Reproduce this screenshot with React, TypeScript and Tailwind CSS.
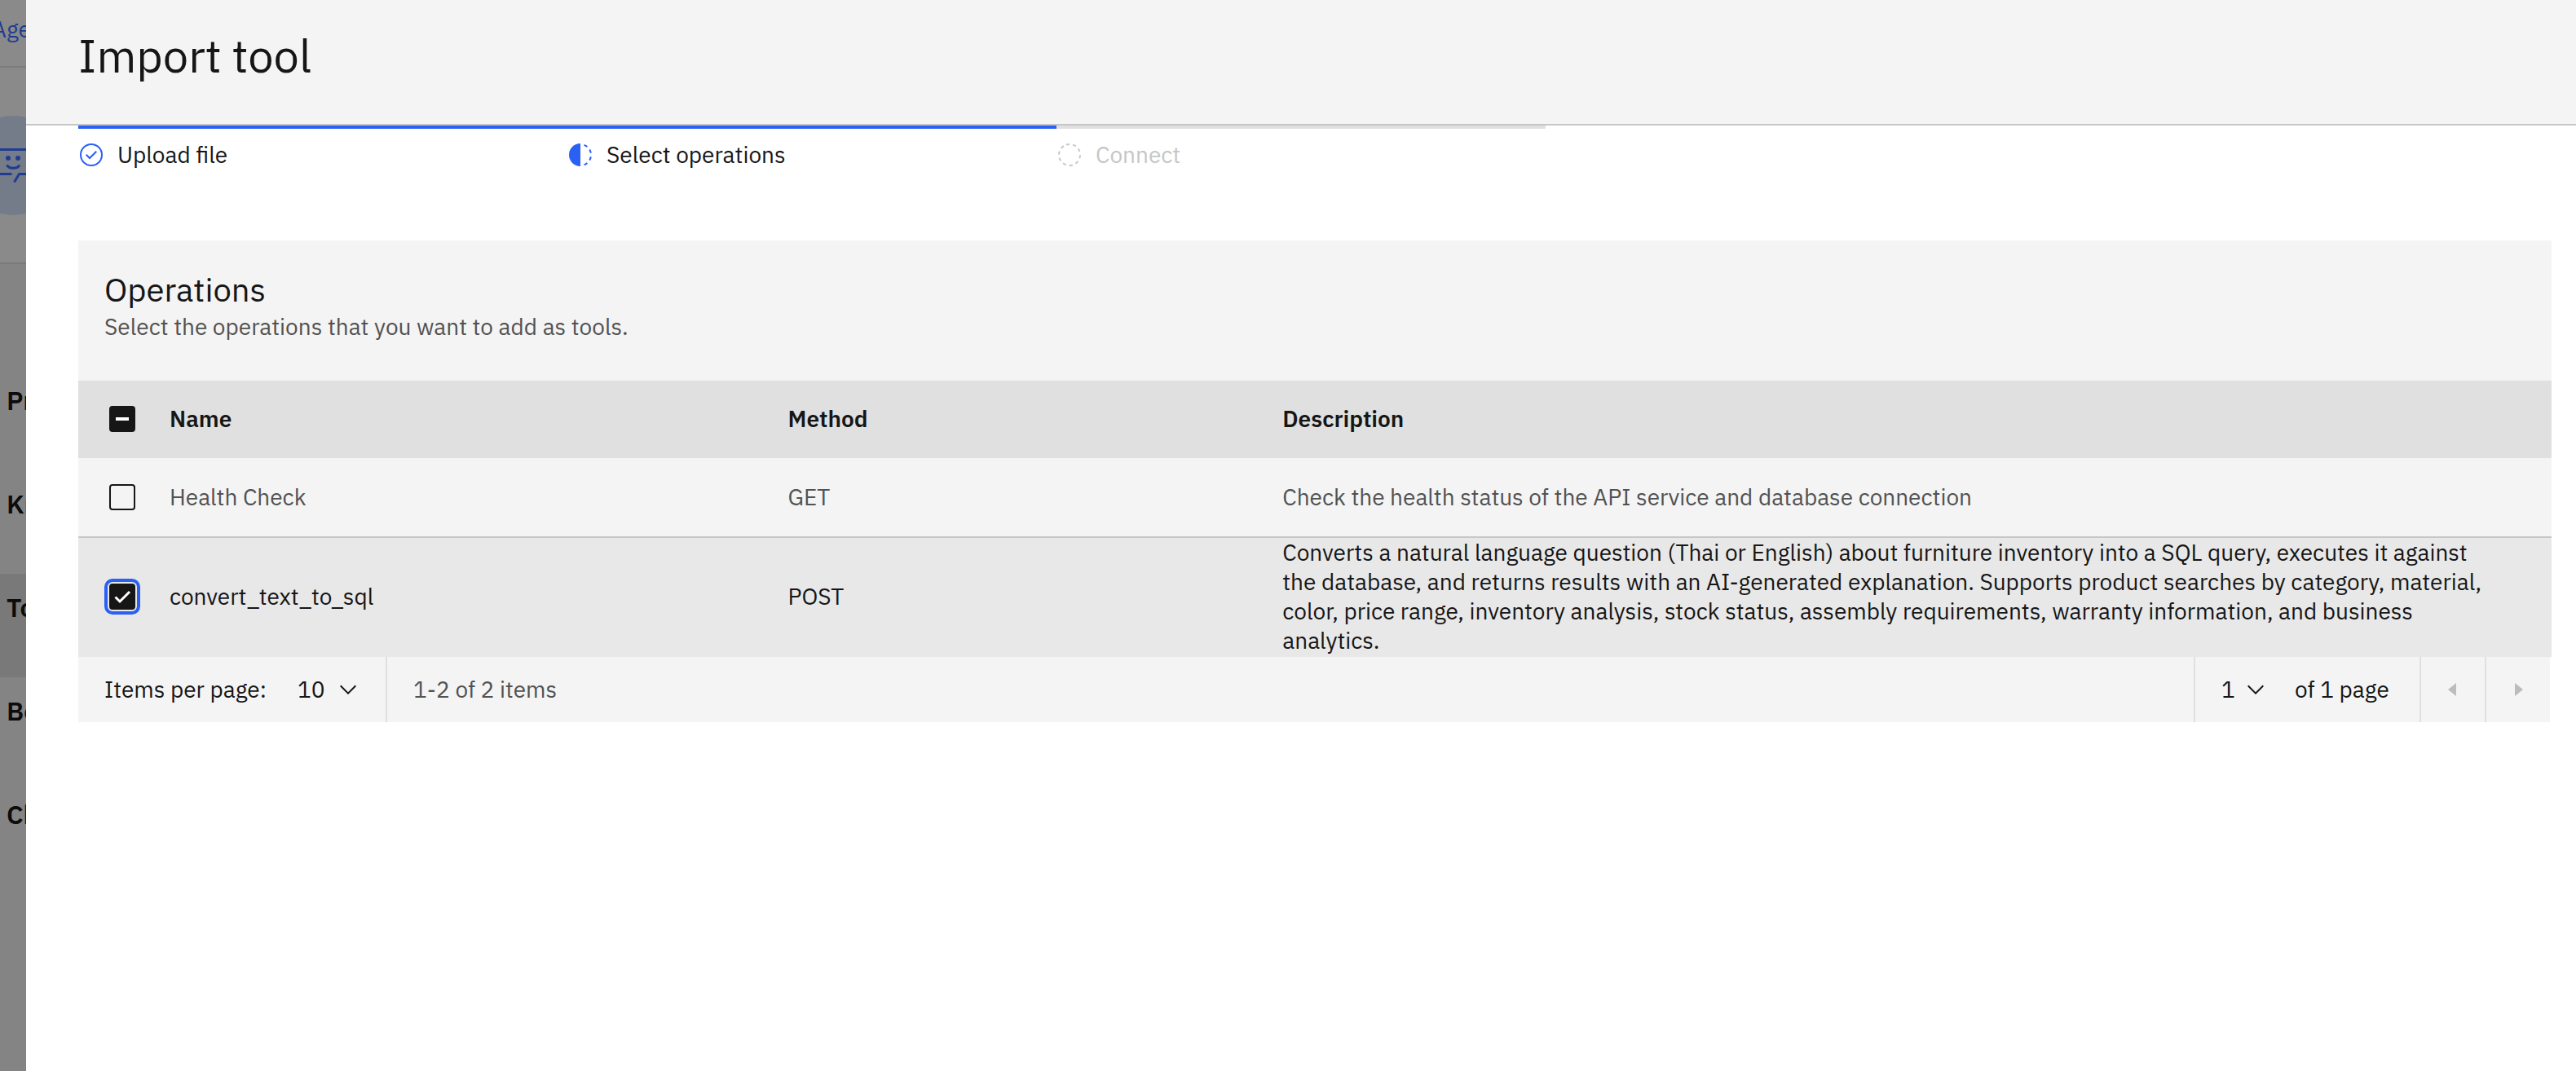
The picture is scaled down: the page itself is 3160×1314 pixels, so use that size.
import React from "react";

type Operation = {
  id: string;
  name: string;
  method: string;
  description: string;
  checked: boolean;
};

const operations: Operation[] = [
  {
    id: "health",
    name: "Health Check",
    method: "GET",
    description: "Check the health status of the API service and database connection",
    checked: false,
  },
  {
    id: "sql",
    name: "convert_text_to_sql",
    method: "POST",
    description:
      "Converts a natural language question (Thai or English) about furniture inventory into a SQL query, executes it against the database, and returns results with an AI-generated explanation. Supports product searches by category, material, color, price range, inventory analysis, stock status, assembly requirements, warranty information, and business analytics.",
    checked: true,
  },
];

const sections = ["Profile", "Knowledge", "Toolset", "Behavior", "Channels"];

function CompleteIcon() {
  return (
    <svg viewBox="0 0 32 32" className="size-8 shrink-0 fill-[#2b60f5]" aria-hidden="true">
      <path d="M14 21.414L9 16.413 10.413 15 14 18.586 21.585 11 23 12.415z" />
      <path d="M16 2a14 14 0 1 0 14 14A14 14 0 0 0 16 2Zm0 26a12 12 0 1 1 12-12 12 12 0 0 1-12 12Z" />
    </svg>
  );
}

function CurrentIcon() {
  return (
    <svg viewBox="0 0 32 32" className="size-8 shrink-0 fill-[#2b60f5]" aria-hidden="true">
      <path d="M23.764 6.859l1.285-1.531A13.976 13.976 0 0 0 20.867 2.887l-.684 1.878A11.973 11.973 0 0 1 23.764 6.859Z" />
      <path d="M27.81 14l1.968-.413A13.889 13.889 0 0 0 28.14 9.046L26.409 10A12.52 12.52 0 0 1 27.81 14Z" />
      <path d="M20.184 27.235l.683 1.878a13.976 13.976 0 0 0 4.182-2.441l-1.285-1.531A11.973 11.973 0 0 1 20.184 27.235Z" />
      <path d="M26.409 22L28.14 23a14.14 14.14 0 0 0 1.638-4.587L27.81 18.066A12.152 12.152 0 0 1 26.409 22Z" />
      <path d="M16 30V2a14 14 0 0 0 0 28Z" />
    </svg>
  );
}

function PendingIcon() {
  return (
    <svg viewBox="0 0 32 32" className="size-8 shrink-0" aria-hidden="true">
      <circle
        cx="16"
        cy="16"
        r="13"
        fill="none"
        stroke="#c6c6c6"
        strokeWidth="2"
        strokeDasharray="4 4.168"
        transform="rotate(-107.8 16 16)"
      />
    </svg>
  );
}

function Chevron() {
  return (
    <svg
      viewBox="0 0 16 16"
      className="pointer-events-none absolute top-1/2 right-0 size-8 -translate-y-1/2 fill-[#161616]"
      aria-hidden="true"
    >
      <path d="M8 11L3 6 3.7 5.3 8 9.6 12.3 5.3 13 6z" />
    </svg>
  );
}

function Checkbox({
  label,
  state,
  focused = false,
}: {
  label: string;
  state: "off" | "on" | "mixed";
  focused?: boolean;
}) {
  const fill = state === "off" ? "bg-transparent" : "bg-[#161616]";
  const ring = focused ? "outline-4 outline-offset-2 outline-[#2b60f5]" : "";
  return (
    <span className="relative ml-[38px] block size-8">
      <input
        type="checkbox"
        aria-label={label}
        defaultChecked={state === "on"}
        ref={(el) => {
          if (el) el.indeterminate = state === "mixed";
        }}
        className={`block size-8 appearance-none rounded-[4px] border-2 border-[#161616] ${fill} ${ring}`}
      />
      {state !== "off" && (
        <svg viewBox="0 0 32 32" className="pointer-events-none absolute inset-0 size-8" aria-hidden="true">
          {state === "on" ? (
            <path d="M7.5 16.5L13 22L25 10" fill="none" stroke="#fff" strokeWidth="3" />
          ) : (
            <rect x="8" y="14" width="16" height="4" fill="#fff" />
          )}
        </svg>
      )}
    </span>
  );
}

function Backdrop() {
  return (
    <aside className="flex w-8 shrink-0 flex-col overflow-hidden bg-[#848484] whitespace-nowrap">
      <div className="flex h-[83px] items-start border-b-2 border-[#7c7c7c] bg-[#8a8a8a] pt-[18px]">
        <a href="#agents" className="-ml-2.5 text-[#1f3d90]">
          Agents
        </a>
      </div>
      <div className="flex h-[241px] items-center border-b-2 border-[#7a7a7a] bg-[#8a8a8a]">
        <svg viewBox="0 0 32 122" className="h-[122px] w-8" aria-hidden="true">
          <circle cx="16" cy="61" r="61" fill="#747b89" />
          <g fill="none" stroke="#1f3d90" strokeWidth="3">
            <path d="M0 41.5H32M0 71.5H14.5M32 71.5H23.5L17.5 81.5" />
            <path d="M8.5 60.5C11 65.5 21.5 65.5 24 60.5" />
          </g>
          <circle cx="10" cy="52" r="3" fill="#1f3d90" />
          <circle cx="22" cy="52" r="3" fill="#1f3d90" />
        </svg>
      </div>
      <nav className="mt-[126px]">
        {sections.map((s) => (
          <a
            key={s}
            href={`#${s.toLowerCase()}`}
            className={`block h-[127px] pt-5 pl-2 text-[32px] leading-[42px] font-semibold text-[#0c0c0c] ${
              s === "Toolset" ? "bg-[#797979]" : ""
            }`}
          >
            {s}
          </a>
        ))}
      </nav>
    </aside>
  );
}

function Steps() {
  const steps = [
    { label: "Upload file", icon: <CompleteIcon />, done: true },
    { label: "Select operations", icon: <CurrentIcon />, done: true },
    { label: "Connect", icon: <PendingIcon />, done: false },
  ];
  return (
    <ol className="flex">
      {steps.map((s) => (
        <li
          key={s.label}
          className={`flex w-[600px] items-center gap-4 border-t-4 pt-3.5 ${
            s.done ? "border-[#2b60f5] text-[#161616]" : "border-[#e0e0e0] text-[#c6c6c6]"
          }`}
        >
          {s.icon}
          <span>{s.label}</span>
        </li>
      ))}
    </ol>
  );
}

function OperationsTable() {
  return (
    <table className="w-full table-fixed border-separate border-spacing-0 text-left">
      <colgroup>
        <col className="w-20" />
        <col className="w-[25%]" />
        <col className="w-[20%]" />
        <col />
      </colgroup>
      <thead>
        <tr className="h-[95px] bg-[#e0e0e0]">
          <th className="p-0 pb-0.5">
            <Checkbox label="Select all operations" state="mixed" />
          </th>
          <th className="pt-0 pr-0 pb-0.5 pl-8 font-semibold">Name</th>
          <th className="pt-0 pr-0 pb-0.5 pl-8 font-semibold">Method</th>
          <th className="pt-0 pr-0 pb-0.5 pl-8 font-semibold">Description</th>
        </tr>
      </thead>
      <tbody>
        {operations.map((op) => (
          <tr
            key={op.id}
            className={
              op.checked
                ? "h-[146px] bg-[#e8e8e8] text-[#161616] *:border-[#e8e8e8]"
                : "h-[98px] bg-[#f4f4f4] text-[#525252] *:border-[#c6c6c6]"
            }
          >
            <td className="border-b-2 p-0">
              <Checkbox label={`Select ${op.name}`} state={op.checked ? "on" : "off"} focused={op.checked} />
            </td>
            <td className="border-b-2 py-0 pr-0 pl-8">{op.name}</td>
            <td className="border-b-2 py-0 pr-0 pl-8">{op.method}</td>
            <td className="border-b-2 py-0 pr-[75px] pl-8">{op.description}</td>
          </tr>
        ))}
      </tbody>
    </table>
  );
}

function Pagination() {
  return (
    <div className="mr-0.5 flex h-20 items-stretch bg-[#f4f4f4]">
      <div className="flex w-[379px] items-center justify-between border-r-2 border-[#e0e0e0] pr-[30px] pl-8">
        <label htmlFor="page-size">Items per page:</label>
        <span className="relative block w-[78px]">
          <select id="page-size" className="block w-full appearance-none bg-transparent p-0">
            <option>10</option>
          </select>
          <Chevron />
        </span>
      </div>
      <p className="flex items-center pl-8 text-[#525252]">1-2 of 2 items</p>
      <div className="ml-auto flex w-[277px] items-center gap-8 border-l-2 border-[#e0e0e0] pl-8">
        <span className="relative block w-[58px]">
          <select aria-label="Page number" className="block w-full appearance-none bg-transparent p-0">
            <option>1</option>
          </select>
          <Chevron />
        </span>
        <span>of 1 page</span>
      </div>
      <button
        type="button"
        disabled
        aria-label="Previous page"
        className="flex w-20 items-center justify-center border-l-2 border-[#e0e0e0]"
      >
        <svg viewBox="0 0 32 32" className="size-8 fill-[#bcbcbc]" aria-hidden="true">
          <path d="M20 24L10 16 20 8z" />
        </svg>
      </button>
      <button
        type="button"
        disabled
        aria-label="Next page"
        className="flex w-20 items-center justify-center border-l-2 border-[#e0e0e0]"
      >
        <svg viewBox="0 0 32 32" className="size-8 fill-[#bcbcbc]" aria-hidden="true">
          <path d="M12 8L22 16 12 24z" />
        </svg>
      </button>
    </div>
  );
}

export default function App() {
  return (
    <div className="flex min-h-screen bg-white font-['IBM_Plex_Sans','Open_Sans',sans-serif] text-[28px] leading-9 text-[#161616]">
      <Backdrop />
      <main className="min-w-0 flex-1">
        <header className="border-b-2 border-[#c6c6c6] bg-[#f4f4f4] px-16 pt-9 pb-[52px]">
          <h1 className="text-[56px] leading-[64px]">Import tool</h1>
        </header>
        <div className="pr-[30px] pl-16">
          <Steps />
          <section className="mt-[87px]">
            <div className="bg-[#f4f4f4] px-8 pt-8 pb-12">
              <h2 className="text-[40px] leading-[56px]">Operations</h2>
              <p className="text-[#525252]">Select the operations that you want to add as tools.</p>
            </div>
            <OperationsTable />
            <Pagination />
          </section>
        </div>
      </main>
    </div>
  );
}
